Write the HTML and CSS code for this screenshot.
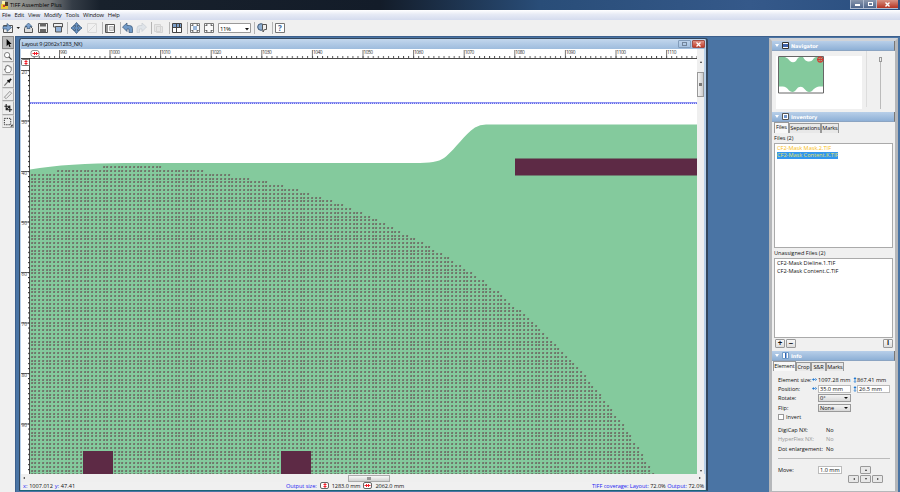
FILE: index.html
```html
<!DOCTYPE html>
<html lang="en">
  <head>
    <meta charset="UTF-8" />
    <title>TIFF Assembler Plus</title>
    <link rel="stylesheet" href="styles.css" />
  </head>
  <body>
    <div class="app">
      <div class="titlebar">
        <svg class="app-icon" width="8" height="8" viewBox="0 0 8 8">
          <rect y="3" width="7" height="5" fill="#e8c637" />
          <rect width="3" height="3" x="1" fill="#fff3a8" />
          <rect x="4" y="1" width="3" height="4" fill="#4a3a2a" />
          <rect x="2" y="4" width="2" height="2" fill="#d6402c" />
        </svg>
        <span class="app-name">TIFF Assembler Plus</span>
        <div class="win-buttons">
          <span class="win-btn"><i class="min"></i></span>
          <span class="win-btn"><i class="max"></i></span>
          <span class="win-btn win-close"><svg width="5" height="5" viewBox="0 0 5 5"><path d="M.5 .5l4 4M4.500 .5l-4 4" stroke="#fff" stroke-width="1.400" /></svg></span>
        </div>
      </div>

      <div class="menubar">
        <span>File</span><span>Edit</span><span>View</span><span>Modify</span
        ><span>Tools</span><span>Window</span><span>Help</span>
      </div>

      <div class="toolbar">
        <svg width="300" height="16" viewBox="0 0 300 16">
          <!-- new -->
          <path d="M3.500 5.500h9v7h-9z" fill="#eee" stroke="#555" />
          <path d="M3 6.500h4V3.500l4.500 4-4.500 4V9H3z" fill="#7fa3cf" stroke="#385778" stroke-width=".7" />
          <path d="M16.500 7h3.500l-1.700 2z" fill="#222" />
          <!-- open -->
          <path d="M24.500 8.500l1-2h5l2 2v4h-8z" fill="#ddd" stroke="#555" />
          <path d="M25 6.500l3.500-3.500 3.500 3.500h-2v2h-3v-2z" fill="#7fa3cf" stroke="#385778" stroke-width=".7" />
          <!-- save -->
          <path d="M38.500 3.500h9v9h-9z" fill="#eee" stroke="#555" />
          <path d="M40 3h6v3.500h-6zM40 9h6v3h-6z" fill="#666" />
          <!-- print -->
          <path d="M53.500 3.500h9v3.500h-9z" fill="#eee" stroke="#555" />
          <path d="M55.500 6.500h6v5.500h-6z" fill="#91b1d8" stroke="#555" />
          <path d="M67.500 2v12M102.500 2v12M120.500 2v12M151.500 2v12M169.500 2v12M187.500 2v12M254.500 2v12M272.500 2v12" stroke="#b4b4b4" />
          <!-- move -->
          <path d="M76.500 2.500l2.500 3h-1.500V7h1.500V5.500l3 2.500-3 2.500V9h-1.500v1.500H79l-2.500 3-2.500-3h1.500V9H74v1.500L71 8l3-2.500V7h1.500V5.500H74z" fill="#6a93c2" stroke="#294b70" stroke-width=".7" />
          <path d="M87.500 3.500h9v9h-9zM88 12l8-8" fill="none" stroke="#dadada" />
          <!-- panel -->
          <path d="M105.500 4.500h9v8h-9z" fill="#fff" stroke="#555" />
          <path d="M106 5h2v7h-2z" fill="#999" />
          <path d="M109.500 6.500h4v4h-4z" fill="#ddd" stroke="#888" stroke-width=".5" />
          <!-- undo / redo -->
          <path d="M127 3v2.500h2.500q3 0 3 3v4H129V9h-2v2.500L122.500 7z" fill="#7099c6" stroke="#365475" stroke-width=".7" />
          <path d="M142 3v2.500h-2q-3 0-3 3v4h2.500V9h2.500v2.500l4.500-4.500z" fill="#dfe4e9" stroke="#c7cdd3" stroke-width=".7" />
          <path d="M154.500 4.500h6v7h-6zM156.500 6.500h6v6h-6z" fill="#e6e6e6" stroke="#d4d4d4" />
          <!-- grid -->
          <path d="M172.500 3.500h9v9h-9z" fill="#fff" stroke="#444" />
          <path d="M173 4h3v3h-3zM177 4h4v3h-4z" fill="#7d9fc8" />
          <path d="M176.500 4v8M179.500 4v4M173 7.500h8" stroke="#444" />
          <!-- fit buttons -->
          <path d="M190.500 3.500h9v9h-9zM204.500 3.500h9v9h-9z" fill="#fafafa" stroke="#777" />
          <path d="M193 6h4v4h-4z" fill="#9ab7da" />
          <path d="M192 6V5h1.500M196.500 5H198v1M192 10v1h1.500M196.500 11h1.500v-1M206 6V5h1.500M210.500 5H212v1M206 10v1h1.500M210.500 11h1.500v-1" fill="none" stroke="#333" />
          <!-- zoom combo -->
          <path d="M218.500 3.500h32v9h-32z" fill="#fff" stroke="#999" />
          <text class="zoom-text" x="220" y="10.500" textLength="11">11%</text>
          <path d="M245 8h4l-2 2.500z" fill="#111" />
          <!-- globe -->
          <circle cx="261" cy="7" r="3.300" fill="#8daed2" stroke="#3e5875" />
          <path d="M262.500 4.500h4v5h-2l-1.500 2.500V9.500h-.5z" fill="#eee" stroke="#555" />
          <!-- help -->
          <path d="M275.500 3.500h9v9h-9z" fill="#fff" stroke="#777" />
          <text class="help-text" x="278" y="11">?</text>
        </svg>
      </div>

      <div class="main">
        <div class="tools">
          <div class="tool active">
            <svg viewBox="0 0 11 11"><path d="M4 1v8l2-2 1 3 1.300-.6L7.200 6.600H9.500z" fill="#000" /></svg>
          </div>
          <div class="tool">
            <svg viewBox="0 0 11 11"><circle cx="4.500" cy="4.500" r="2.900" fill="#fff" stroke="#555" stroke-width=".8" /><path d="M6.500 6.500l3 3" stroke="#444" stroke-width="1.300" /></svg>
          </div>
          <div class="tool">
            <svg viewBox="0 0 11 11"><path d="M3.500 9.500L1.500 5.500l1.500.4V2.500h1.300V1.500h1.500v.7h1.700V3.500h1.500v3.500L7.500 9.500z" fill="#fff" stroke="#555" stroke-width=".8" /></svg>
          </div>
          <div class="tool">
            <svg viewBox="0 0 11 11"><path d="M1.500 9.500l4.500-5" stroke="#777" stroke-width="1.300" /><path d="M5 3.500l2.500 2.500M6.500 4.500L9 2" stroke="#111" stroke-width="1.900" /></svg>
          </div>
          <div class="tool">
            <svg viewBox="0 0 11 11"><path d="M1.500 8L7.500 1.500 9.500 3.500 3.500 9.500z" fill="#eee" stroke="#777" stroke-width=".8" /></svg>
          </div>
          <div class="tool">
            <svg viewBox="0 0 11 11"><path d="M3.500 1v6.500H10M1.500 3.500h6V10M4 7l4-4" fill="none" stroke="#222" stroke-width="1.200" /></svg>
          </div>
          <div class="tool">
            <svg viewBox="0 0 11 11"><path d="M1.500 1.500h7v7h-7z" fill="none" stroke="#222" stroke-dasharray="1.500 1" /><path d="M8 10.500h2.500V8z" /></svg>
          </div>
        </div>

        <div class="workspace">
          <div class="doc">
            <div class="doc-title">
              <span>Layout 9 (2062x1283_NX)</span>
              <div class="doc-buttons">
                <span class="doc-max"><i></i></span><span class="doc-close"><svg width="5" height="5" viewBox="0 0 5 5"><path d="M.5 .5l4 4M4.500 .5l-4 4" stroke="#fff" stroke-width="1.300" /></svg></span>
              </div>
            </div>
            <div class="doc-body">
              <svg class="canvas" width="676" height="425" viewBox="21 49 676 425">
                <defs>
                  <pattern id="hticks" x="59" y="49" width="5.060" height="10" patternUnits="userSpaceOnUse">
                    <path d="M.5 7v2" stroke="#444" stroke-width=".9" />
                  </pattern>
                  <pattern id="vticks" x="21" y="70" width="9" height="5.050" patternUnits="userSpaceOnUse">
                    <path d="M7 .5h2" stroke="#333" stroke-width=".9" />
                  </pattern>
                  <clipPath id="view"><path d="M30 59h667v415H30z" /></clipPath>
                </defs>
                <path d="M21 49h676v425H21z" fill="#fff" />
                <g clip-path="url(#view)">
                  <path d="M30 169.500Q68 163 125 163H420C434 162.700 441 161 446 156.500C456 148 464 135 475 127.500Q480 124.600 486 124.600H697V474H30z" fill="#84ca9d" />
                  <path id="screen" fill="#70756a" />
                  <path d="M515 158.500h182v17H515zM83 451h30v23H83zM281 451h30v23h-30z" fill="#5d2a45" />
                  <path d="M30 102.700h667" stroke="#8389ef" stroke-width="1" />
                  <path d="M30 103.300h667" stroke="#2b34e4" stroke-width=".9" stroke-dasharray="1.200 .8" />
                </g>
                <path d="M33 49h664v10H33z" fill="url(#hticks)" />
                <path d="M21 68h9v406h-9z" fill="url(#vticks)" />
                <path d="M21 58.500h676M29.500 58v416" stroke="#333" stroke-width=".9" />
                <path d="M59.500 50v8M110 50v8M160.600 50v8M211.200 50v8M261.800 50v8M312.400 50v8M363 50v8M413.600 50v8M464.200 50v8M514.800 50v8M565.400 50v8M616 50v8M666.600 50v8" stroke="#555" stroke-width=".8" />
                <path d="M21 70.500h8M21 121h8M21 171.500h8M21 222h8M21 272.500h8M21 323h8M21 373.500h8M21 424h8" stroke="#444" stroke-width=".8" />
                <g class="ruler-text">
                  <text x="60" y="54" textLength="7">990</text>
                  <text x="110.500" y="54" textLength="9.500">1000</text>
                  <text x="161" y="54" textLength="9.500">1010</text>
                  <text x="211.700" y="54" textLength="9.500">1020</text>
                  <text x="262.300" y="54" textLength="9.500">1030</text>
                  <text x="312.900" y="54" textLength="9.500">1040</text>
                  <text x="363.500" y="54" textLength="9.500">1050</text>
                  <text x="414" y="54" textLength="9.500">1060</text>
                  <text x="464.700" y="54" textLength="9.500">1070</text>
                  <text x="515.300" y="54" textLength="9.500">1080</text>
                  <text x="566" y="54" textLength="9.500">1090</text>
                  <text x="616.500" y="54" textLength="9.500">1100</text>
                  <text x="667" y="54" textLength="9.500">1110</text>
                  <text x="21.500" y="73.500">20</text>
                  <text x="21.500" y="124">30</text>
                  <text x="21.500" y="174.500">40</text>
                  <text x="21.500" y="225">50</text>
                  <text x="21.500" y="275.500">60</text>
                  <text x="21.500" y="326">70</text>
                  <text x="21.500" y="376.500">80</text>
                  <text x="21.500" y="427">90</text>
                </g>
                <!-- ruler origin markers -->
                <rect x="31" y="50.500" width="8" height="6" rx="2" fill="#fff" stroke="#777" stroke-width=".8" />
                <path d="M32.500 53.500h6M34.500 52v3M36.500 52v3" stroke="#f0202c" />
                <rect x="21.500" y="59.500" width="8" height="6" rx="1" fill="#fff" stroke="#555" stroke-width=".8" />
                <path d="M26 60v5M24.500 61.500h3M24.500 63.500h3" stroke="#f0202c" />
              </svg>
              <div class="vscroll">
                <span class="arrow up"></span>
                <span class="vthumb"></span>
                <span class="arrow down"></span>
              </div>
            </div>
            <div class="hscroll">
              <span class="arrow left"></span>
              <span class="hthumb"></span>
              <span class="arrow right"></span>
            </div>
            <div class="status">
              <div class="coords"><b>x:</b> 1007.012 <b>y:</b> 47.41</div>
              <div class="output">
                <b>Output size:</b>
                <svg width="9" height="7" viewBox="0 0 9 7"><rect x=".5" y=".5" width="8" height="6" rx="1.500" fill="#fff" stroke="#666" /><path d="M5 1v5M3.500 2.500h3M3.500 4.500h3" stroke="#f0202c" /></svg>
                <span>1283.0 mm</span>
                <svg width="9" height="7" viewBox="0 0 9 7"><rect x=".5" y=".5" width="8" height="6" rx="1.500" fill="#fff" stroke="#666" /><path d="M1.500 3.500h6M3.500 2v3M5.500 2v3" stroke="#f0202c" /></svg>
                <span>2062.0 mm</span>
              </div>
              <div class="coverage"><b>TIFF coverage:</b> <b>Layout:</b> 72.0% <b>Output:</b> 72.0%</div>
            </div>
          </div>

          <div class="panel">
            <div class="panel-head">
              <i class="fold"></i>
              <svg width="7" height="7" viewBox="0 0 7 7"><path d="M.5 .5h6v6h-6z" fill="#fff" stroke="#333" /><path d="M1 2h5v3H1z" fill="#3e63ab" /></svg>
              <span>Navigator</span>
            </div>
            <div class="navigator">
              <div class="map">
                <svg width="86" height="53" viewBox="776 55 86 53">
                  <path d="M778.500 56H785Q788 57 790 60Q793 62.500 796 60Q798 56 800 56H803Q805 60 808 60.500Q812 61 814 57L816 56H823.500V85.500H819Q815 86 812 90Q809 92 806.500 90L803 86.500Q801 85 798 86.500L795 90Q792 92 789 89.500Q786 85 782 85.500H778.500z" fill="#84ca9d" />
                  <path d="M778.500 55.500h45v36.500h-45z" fill="none" stroke="#666" />
                  <circle cx="820.200" cy="58.500" r="2.500" fill="none" stroke="#d53a33" stroke-width="1.200" />
                  <path d="M817 58.500h6.500M820.200 55.500v6" stroke="#d53a33" />
                </svg>
              </div>
              <div class="slider"><i></i></div>
            </div>

            <div class="panel-head">
              <i class="fold"></i>
              <svg width="7" height="7" viewBox="0 0 7 7"><path d="M.5 .5h6v6h-6z" fill="#fff" stroke="#555" /><path d="M2 2h3v3H2z" fill="#7195c9" /></svg>
              <span>Inventory</span>
            </div>
            <div class="inventory">
              <div class="tabs">
                <span class="tab on tab-files">Files</span><span class="tab tab-sep">Separations</span><span class="tab tab-marks">Marks</span>
              </div>
              <div class="label">Files (2)</div>
              <div class="list list-files">
                <div class="item yellow">CF2-Mask Mask.2.TIF</div>
                <div class="item selected">CF2-Mask Content.K.TIF</div>
              </div>
              <div class="label label-un">Unassigned Files (2)</div>
              <div class="list list-un">
                <div class="item">CF2-Mask Dieline.1.TIF</div>
                <div class="item">CF2-Mask Content.C.TIF</div>
              </div>
              <div class="list-buttons">
                <span class="btn">+</span><span class="btn">−</span><span class="btn info-btn">i</span>
              </div>
            </div>

            <div class="panel-head">
              <i class="fold"></i>
              <svg width="7" height="7" viewBox="0 0 7 7"><path d="M.5 .5h6v6h-6z" fill="#fff" stroke="#6f9bc9" /><path d="M3 1h1.500v5H3z" fill="#2b64b5" /></svg>
              <span>Info</span>
            </div>
            <div class="info">
              <div class="tabs">
                <span class="tab on tab-element">Element</span><span class="tab tab-crop">Crop</span><span class="tab tab-sr">S&amp;R</span><span class="tab tab-marks2">Marks</span>
              </div>
              <div class="fields">
                <div class="row">
                  <span class="name">Element size:</span>
                  <svg class="dim" width="5" height="5" viewBox="0 0 5 5"><path d="M0 2.500l1.800-1.500v3zM5 2.500L3.200 1v3zM1 2.200h3v.7H1z" fill="#1672d0" /></svg>
                  <span class="val">1097.28 mm</span>
                  <svg class="dim-tall" width="4" height="6" viewBox="0 0 4 6"><path d="M2 0l1.500 2h-3zM2 6l1.500-2h-3zM1.600 1h.8v4h-.8z" fill="#1672d0" /></svg>
                  <span class="val">867.41 mm</span>
                </div>
                <div class="row">
                  <span class="name">Position:</span>
                  <svg class="dim" width="5" height="5" viewBox="0 0 5 5"><path d="M0 2.500l1.800-1.500v3zM5 2.500L3.200 1v3zM1 2.200h3v.7H1z" fill="#1672d0" /></svg>
                  <span class="val input">35.0 mm</span>
                  <svg class="dim-tall" width="4" height="6" viewBox="0 0 4 6"><path d="M2 0l1.500 2h-3zM2 6l1.500-2h-3zM1.600 1h.8v4h-.8z" fill="#1672d0" /></svg>
                  <span class="val input">26.5 mm</span>
                </div>
                <div class="row"><span class="name long">Rotate:</span><span class="select">0°</span></div>
                <div class="row"><span class="name long">Flip:</span><span class="select">None</span></div>
                <div class="row"><i class="check"></i><span>Invert</span></div>
                <div class="row gap"><span class="name wide">DigiCap NX:</span><span>No</span></div>
                <div class="row off"><span class="name wide">HyperFlex NX:</span><span>No</span></div>
                <div class="row"><span class="name wide">Dot enlargement:</span><span>No</span></div>
              </div>
              <div class="move">
                <span class="name">Move:</span>
                <span class="val input">1.0 mm</span>
                <div class="pad">
                  <span class="key key-up"><i class="arrow up"></i></span>
                  <span class="key"><i class="arrow left"></i></span>
                  <span class="key"><i class="arrow down"></i></span>
                  <span class="key"><i class="arrow right"></i></span>
                </div>
              </div>
            </div>
          </div>
        </div>
      </div>
    </div>
    <script src="screen.js"></script>
  </body>
</html>
```
FILE: styles.css
```css
* {
  box-sizing: border-box;
}
body {
  margin: 0;
  width: 900px;
  height: 492px;
  overflow: hidden;
  background: #f0f0f0;
  color: #111;
  font-family: "Open Sans", "Noto Sans", sans-serif;
  font-size: 5.6px;
  line-height: 8px;
  white-space: nowrap;
}
svg {
  display: block;
  flex: none;
}
i {
  font-style: normal;
}
.app {
  display: flex;
  flex-direction: column;
  height: 492px;
}

/* top bars */
.titlebar {
  display: flex;
  align-items: center;
  flex: none;
  height: 10px;
  padding-left: 1px;
  background: linear-gradient(90deg, #a3a39b 0, #777a7b 50px, #353d47 72px, #18212c 100px, #131c29 380px, #294d78 540px, #35598a 750px, #294e7f 900px);
}
.app-name {
  margin-left: 1px;
  color: #000;
}
.win-buttons {
  display: flex;
  align-self: flex-start;
  margin-left: auto;
  margin-right: 2px;
}
.win-btn {
  display: flex;
  align-items: center;
  justify-content: center;
  width: 13px;
  height: 9px;
  border: 1px solid #aebbd0;
  border-top: 0;
  border-right-width: 0;
  background: linear-gradient(#8997ad, #50678c);
}
.win-close {
  width: 22px;
  background: linear-gradient(#d89283, #b53422);
}
.min {
  width: 5px;
  height: 2px;
  margin-top: 2px;
  background: #fff;
}
.max {
  width: 5px;
  height: 4px;
  border: 1px solid #fff;
}
.menubar {
  display: flex;
  flex: none;
  gap: 4px;
  height: 10px;
  padding: 1px 2px;
  background: linear-gradient(#fff, #e6eaf5 45%, #d5dcee);
  font-size: 5.8px;
  letter-spacing: -0.18px;
}
.toolbar {
  flex: none;
  height: 16px;
  background: #f0f0f0;
}
.zoom-text {
  font-size: 6px;
}
.help-text {
  font-size: 8px;
  font-weight: bold;
  fill: #416896;
}

.main {
  display: flex;
  flex: 1;
  min-height: 0;
}
.tools {
  display: flex;
  flex-direction: column;
  flex: none;
  width: 15px;
  padding: 0 0 0 2px;
}
.tool {
  width: 12px;
  height: 13.1px;
  padding: 1px 0 0;
  border: 1px solid #ddd;
  border-right-color: #aaa;
  border-bottom-color: #aaa;
  background: #eee;
}
.tool svg {
  width: 10px;
  height: 10px;
}
.tool.active {
  border-color: #888;
  background: #bbb;
}
.workspace {
  display: flex;
  flex: 1;
  justify-content: space-between;
  padding: 1px 3px 0 3px;
  border-left: 1px solid #3c5f8c;
  border-top: 1px solid #3c5f8c;
  background: #4a74a4;
}

/* document window */
.doc {
  width: 689px;
  height: 453px;
  border: 1px solid #33465c;
  border-right-width: 2px;
  border-bottom: 1px solid #1b6478;
  border-radius: 3px 3px 0 0;
  background: #b8d0e9;
  padding: 0 1px;
}
.doc-title {
  display: flex;
  justify-content: space-between;
  height: 10px;
  padding: 1px 0 0 0.7px;
  background: linear-gradient(#c3d7ed, #9ebcdd);
  letter-spacing: -0.22px;
}
.doc-buttons {
  display: flex;
  gap: 1px;
}
.doc-max,
.doc-close {
  display: flex;
  align-items: center;
  justify-content: center;
  width: 13px;
  height: 8px;
  border: 1px solid #829cba;
  border-radius: 1px;
}
.doc-max i {
  width: 5px;
  height: 4px;
  border: 1px solid #71849b;
}
.doc-close {
  border-color: #a24d45;
  background: linear-gradient(#df9285, #c33d2a);
}
.doc-body {
  display: flex;
  height: 425px;
}
.ruler-text {
  font-size: 4.8px;
  fill: #333;
}
.vscroll {
  display: flex;
  flex-direction: column;
  align-items: center;
  width: 7px;
  padding: 12px 0 2px;
  background: #efefef;
}
.vthumb {
  width: 7px;
  height: 25px;
  margin-top: 9px;
  border: 1px solid #999;
  background: linear-gradient(90deg, #f5f5f5, #ccc);
}
.vthumb::after {
  content: "";
  display: block;
  width: 3px;
  height: 3px;
  margin: 10px 1px;
  background: #777;
}
.arrow {
  width: 0;
  height: 0;
  border: 1.5px solid transparent;
}
.arrow.up {
  border-top: 0;
  border-bottom: 2px solid #333;
}
.arrow.down {
  border-bottom: 0;
  border-top: 2px solid #333;
}
.arrow.left {
  border-left: 0;
  border-right: 2px solid #333;
}
.arrow.right {
  border-right: 0;
  border-left: 2px solid #333;
}
.vscroll .down {
  margin-top: auto;
}
.hscroll {
  display: flex;
  align-items: center;
  justify-content: space-between;
  height: 8px;
  padding: 0 4px 0 2px;
  background: #efefef;
}
.hthumb {
  width: 42px;
  height: 7px;
  margin-left: 14px;
  border: 1px solid #aaa;
  background: linear-gradient(#f8f8f8, #d2d2d2);
}
.hthumb::after {
  content: "";
  display: block;
  width: 4px;
  height: 3px;
  margin: 1px auto;
  background: #999;
}
.status {
  display: flex;
  height: 8px;
  padding: 0 1px 0 2px;
  background: #f0f0f0;
  line-height: 8px;
}
.status b {
  font-weight: normal;
  color: #1c1cf0;
}
.coords {
  width: 263px;
  word-spacing: 0.3px;
}
.output {
  display: flex;
  gap: 3px;
  letter-spacing: -0.06px;
}
.coverage {
  margin-left: auto;
  letter-spacing: -0.03px;
}

/* right side */
.panel {
  width: 129px;
  height: 455px;
  margin-right: -1px;
  border: 3px solid #b5b7ba;
  border-top-color: #d0d3d8;
  border-bottom-width: 2px;
  background: #f0f0f0;
}
.panel-head {
  display: flex;
  align-items: center;
  height: 10px;
  padding-left: 3px;
  border-right: 1px solid #777;
  border-bottom: 1px solid #8ba4c2;
  background: linear-gradient(#b8cfe9, #8eb0d6);
  color: #fff;
  font-family: "DejaVu Sans", sans-serif;
  font-size: 5px;
  font-weight: bold;
  letter-spacing: -0.1px;
}
.panel-head svg {
  margin: 0 2px 0 3px;
}
.fold {
  border: 2px solid transparent;
  border-top: 3px solid #fff;
  border-bottom: 0;
}
.navigator {
  display: flex;
  height: 61px;
  padding: 5px 0 0 4px;
}
.map {
  width: 86px;
  height: 53px;
  background: #fff;
}
.slider {
  width: 30px;
  height: 56px;
  margin: -5px 0 0 4px;
  padding: 6px 0 0 12px;
  border-left: 1px solid #ddd;
}
.slider i {
  display: block;
  width: 3px;
  height: 5px;
  border: 1px solid #999;
}
.slider::after {
  content: "";
  display: block;
  width: 1px;
  height: 47px;
  margin-left: 1px;
  background: #bbb;
}
.inventory {
  height: 229px;
  padding: 0 2px 0 1px;
}
.tabs {
  display: flex;
  align-items: flex-end;
  height: 11px;
  margin-left: 1px;
}
.tab {
  height: 10px;
  border: 1px solid #999;
  border-bottom: 0;
  text-align: center;
  background: #e8e8e8;
  letter-spacing: -0.15px;
}
.tab.on {
  height: 11px;
  background: #f8f8f8;
}
.tab-files { width: 15px; }
.tab-sep { width: 32px; }
.tab-marks { width: 18px; }
.tab-element { width: 23px; }
.tab-crop { width: 15px; }
.tab-sr { width: 15px; }
.tab-marks2 { width: 18px; }
.info .tabs {
  height: 10px;
}
.info .tab {
  height: 9px;
}
.info .tab.on {
  height: 10px;
}
.label {
  height: 10px;
  padding: 1px 0 0 1px;
}
.list {
  border: 1px solid #aaa;
  background: #fff;
  margin-left: 1px;
  padding: 1px 2px;
}
.list-files {
  height: 105px;
}
.label-un {
  padding-left: 1px;
}
.list-un {
  height: 80px;
}
.item {
  width: max-content;
  height: 7px;
  line-height: 7px;
}
.yellow {
  color: #f9bd16;
}
.selected {
  background: #3297ef;
  color: #e3e25c;
}
.list-un .item {
  height: 7.5px;
}
.list-buttons {
  display: flex;
  gap: 1px;
  padding: 1px 0 0 2px;
}
.btn {
  width: 10px;
  height: 9px;
  border: 1px solid #999;
  border-radius: 1px;
  background: linear-gradient(#f8f8f8, #ddd);
  font-size: 8px;
  font-weight: bold;
  line-height: 6px;
  text-align: center;
}
.info-btn {
  margin-left: auto;
  font-size: 7px;
}
.fields {
  padding: 4px 0 0 6px;
}
.row {
  display: flex;
  align-items: center;
  height: 9.3px;
}
.name {
  width: 34px;
  letter-spacing: -0.05px;
}
.long {
  width: 40px;
}
.wide {
  width: 48px;
}
.gap {
  margin-top: 4px;
}
.dim {
  margin-right: 1px;
}
.val {
  width: 35px;
}
.input {
  width: 33px;
  height: 8px;
  margin-right: 2px;
  padding-left: 1px;
  border: 1px solid #bbb;
  background: #fff;
  line-height: 6px;
}
.select {
  display: flex;
  align-items: center;
  justify-content: space-between;
  width: 33px;
  height: 8px;
  padding: 0 2px 0 1px;
  border: 1px solid #999;
  background: linear-gradient(#f3f3f3, #d8d8d8);
}
.select::after {
  content: "";
  border: 2px solid transparent;
  border-top-color: #111;
  border-bottom: 0;
}
.check {
  width: 6px;
  height: 6px;
  margin-right: 2px;
  border: 1px solid #999;
  background: #fff;
}
.off {
  color: #999;
}
.move {
  display: flex;
  align-items: flex-start;
  height: 30px;
  margin: 5px 5px 0 6px;
  padding-top: 7px;
  border-top: 1px solid #bbb;
}
.move .name {
  width: 40px;
}
.move .input {
  width: 24px;
}
.pad {
  display: grid;
  grid-template-columns: repeat(3, 11px);
  grid-template-rows: 8px 8px;
  gap: 1px;
  margin-left: 4px;
}
.key {
  display: flex;
  align-items: center;
  justify-content: center;
  border: 1px solid #999;
  border-radius: 1px;
  background: #e8e8e8;
}
.key-up {
  grid-column: 2;
}
.key-up + .key {
  grid-column: 1;
}
```
FILE: screen.js
```js
// halftone dots inside the large circle
const pitch = 3.79;
const cx = 130;
const cy = 763;
const radius = 597.5;
let d = "";

for (let y = 166.3; y < 474; y += pitch) {
  for (let x = 30.5; x < 697; x += pitch) {
    if (Math.hypot(x - cx, y - cy) < radius) {
      // slightly slanted dot
      d += `M${Math.round(x) + 0.3} ${Math.round(y)}h1.9l-.3 1.9h-1.900z`;
    }
  }
}

document.getElementById("screen").setAttribute("d", d);
```
